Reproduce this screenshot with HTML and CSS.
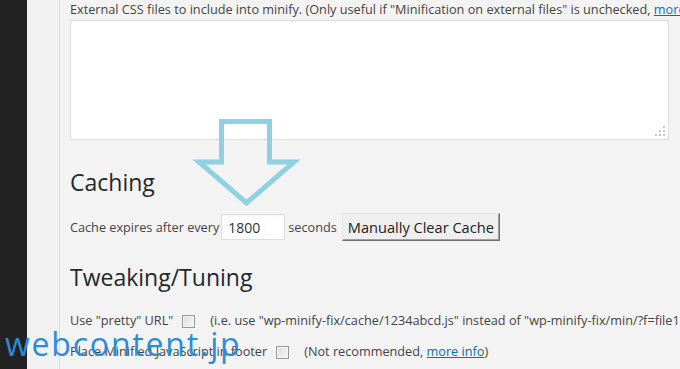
FILE: index.html
```html
<!DOCTYPE html>
<html lang="en">
<head>
    <meta charset="UTF-8">
    <meta name="viewport" content="width=device-width, initial-scale=1.0">
    <title>WP Minify Fix Settings</title>
    <link rel="stylesheet" href="styles.css">
</head>
<body>

    <div class="adminmenu"></div>
    <div class="gutter"></div>

    <div class="wrap">
        <p class="desc">External CSS files to include into minify. (Only useful if "Minification on external files" is unchecked, <a href="#">more info</a>)</p>
        <div class="textarea-box">
            <textarea class="css-files"></textarea>
            <span class="grip"></span>
        </div>

        <h2>Caching</h2>
        <div class="row">
            <span>Cache expires after every</span>
            <input type="text" class="cache-time" value="1800">
            <span>seconds</span>
            <button type="button" class="clear-btn">Manually Clear Cache</button>
        </div>

        <h2 class="tweak">Tweaking/Tuning</h2>
        <div class="row option">
            <span>Use "pretty" URL"</span>
            <input type="checkbox" class="check">
            <span class="note">(i.e. use "wp-minify-fix/cache/1234abcd.js" instead of "wp-minify-fix/min/?f=file1.js,file2.js,...")</span>
        </div>
        <div class="row option">
            <span>Place Minified JavaScript in footer</span>
            <input type="checkbox" class="check">
            <span class="note">(Not recommended, <a href="#">more info</a>)</span>
        </div>
    </div>

    <svg class="arrow" width="680" height="369" viewBox="0 0 680 369">
        <polygon points="221.5,121.5 269.5,121.5 269.5,162 294,162 246.5,203 199,162 221.5,162" fill="none" stroke="#8fd0e1" stroke-width="5" stroke-linejoin="miter"/>
    </svg>

    <div class="watermark">webcontent.jp</div>

</body>
</html>
```

FILE: styles.css
```css
body {
    margin: 0;
    padding: 0;
    height: 369px;
    overflow: hidden;
    display: flex;
    background-color: #f1f1f1;
    color: #444;
    font-family: 'Open Sans', 'Noto Sans', sans-serif;
    font-size: 12.7px;
    line-height: 18px;
}
.adminmenu {
    width: 27px;
    flex-shrink: 0;
    background-color: #222;
}
.gutter {
    width: 32px;
    flex-shrink: 0;
    border-right: 1px solid #dcdcdc;
}
.wrap {
    flex: 1;
    padding-left: 10px;
    min-width: 0;
    background-color: #f3f3f3;
}
.wrap a {
    color: #0073aa;
    text-decoration: underline;
}
.desc {
    margin: 0;
    white-space: nowrap;
}
.textarea-box {
    position: relative;
    width: 599px;
    margin-top: 2px;
}
.css-files {
    display: block;
    box-sizing: border-box;
    width: 599px;
    height: 120px;
    margin: 0;
    border: 1px solid #ddd;
    background-color: #fff;
    resize: none;
    box-shadow: inset 0 1px 2px rgba(0, 0, 0, 0.04);
}
.grip {
    position: absolute;
    right: 3px;
    bottom: 3px;
    width: 11px;
    height: 11px;
    background:
        linear-gradient(#c8c8c8, #c8c8c8) 8px 0 / 2px 2px no-repeat,
        linear-gradient(#c8c8c8, #c8c8c8) 4px 4px / 2px 2px no-repeat,
        linear-gradient(#c8c8c8, #c8c8c8) 8px 4px / 2px 2px no-repeat,
        linear-gradient(#c8c8c8, #c8c8c8) 0 8px / 2px 2px no-repeat,
        linear-gradient(#c8c8c8, #c8c8c8) 4px 8px / 2px 2px no-repeat,
        linear-gradient(#c8c8c8, #c8c8c8) 8px 8px / 2px 2px no-repeat;
}
h2 {
    margin: 28px 0 16px;
    font-size: 23px;
    line-height: 29px;
    font-weight: 400;
    color: #23282d;
}
h2.tweak {
    margin: 22px 0 19px;
}
.row {
    display: flex;
    align-items: center;
    white-space: nowrap;
}
.row > * {
    flex-shrink: 0;
}
.cache-time {
    box-sizing: border-box;
    width: 64px;
    height: 26px;
    margin: 0 3px 0 2px;
    padding: 0 6px;
    border: 1px solid #ddd;
    background-color: #fff;
    font-family: 'Open Sans', sans-serif;
    font-size: 14px;
    color: #333;
    box-shadow: inset 0 1px 2px rgba(0, 0, 0, 0.05);
}
.clear-btn {
    box-sizing: border-box;
    height: 28px;
    margin-left: 5px;
    padding: 0 5px;
    border: 1px solid;
    border-color: #e6e6e6 #6f6f6f #6f6f6f #e6e6e6;
    background-color: #efefef;
    font-family: 'Open Sans', sans-serif;
    font-size: 14.6px;
    color: #222;
    box-shadow: inset -1px -1px 0 #a0a0a0;
}
.option {
    margin-bottom: 13px;
}
.check {
    -webkit-appearance: none;
    appearance: none;
    width: 13px;
    height: 13px;
    margin: 2px 15px 0 9px;
    border: 1px solid #999;
    background: linear-gradient(135deg, #dcdcdc, #f8f8f8);
    box-shadow: inset 0 0 0 1px #f4f4f4;
}
.arrow {
    position: absolute;
    top: 0;
    left: 0;
    pointer-events: none;
}
.watermark {
    position: absolute;
    left: 5px;
    top: 328px;
    font-family: 'Open Sans', sans-serif;
    font-size: 32px;
    line-height: 32px;
    color: #2b8cd9;
    letter-spacing: 1.8px;
}
```
